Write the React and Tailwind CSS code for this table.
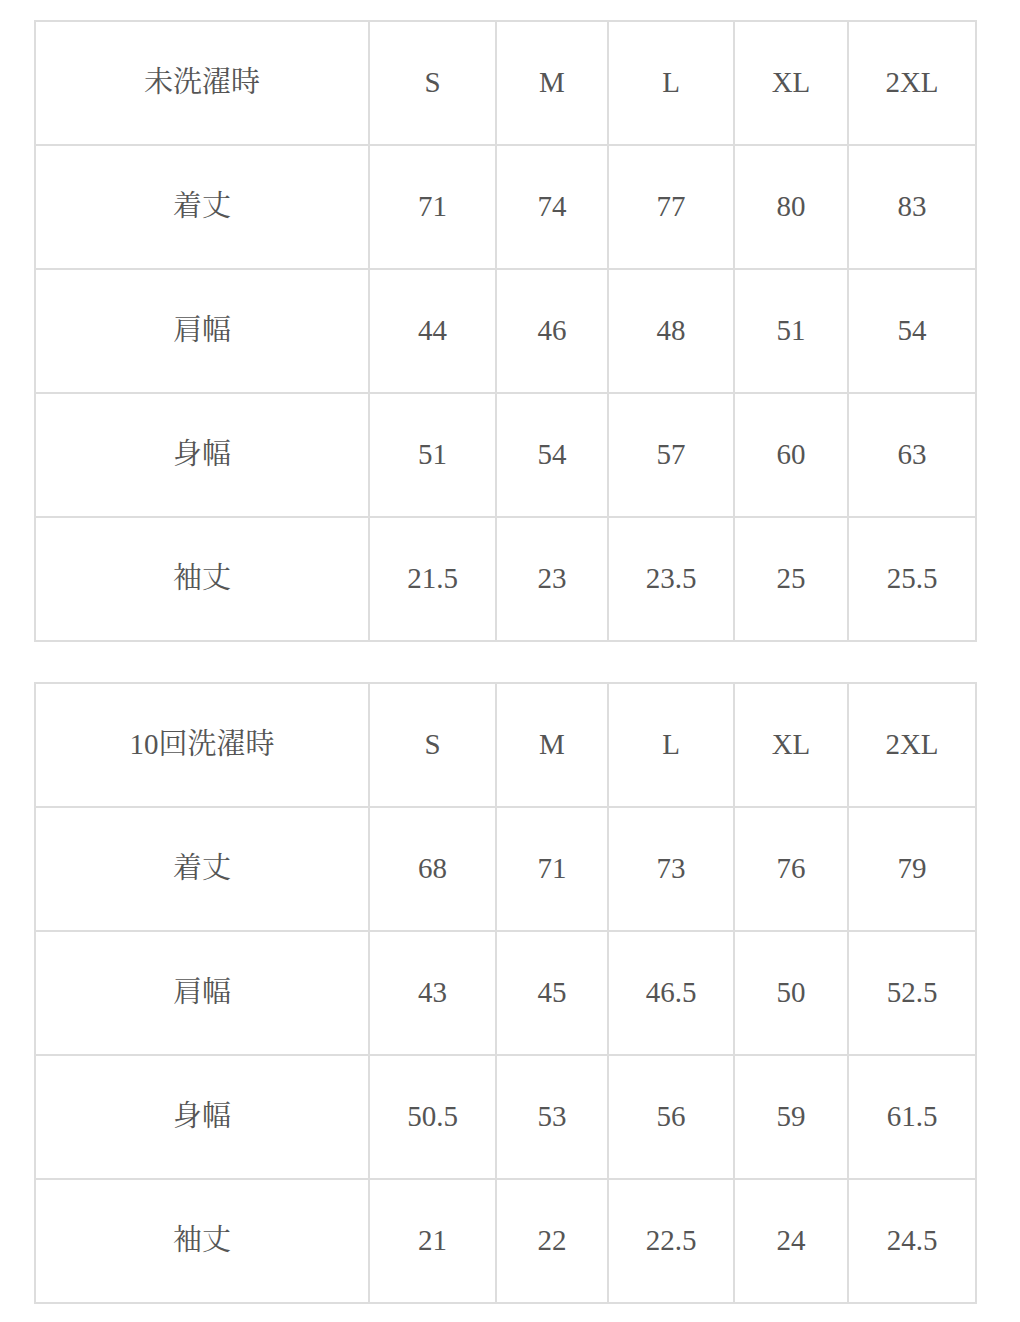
const sizes = ['S', 'M', 'L', 'XL', '2XL'];

const tables = [
  {
    title: '未洗濯時',
    rows: [
      ['着丈', '71', '74', '77', '80', '83'],
      ['肩幅', '44', '46', '48', '51', '54'],
      ['身幅', '51', '54', '57', '60', '63'],
      ['袖丈', '21.5', '23', '23.5', '25', '25.5'],
    ],
  },
  {
    title: '10回洗濯時',
    rows: [
      ['着丈', '68', '71', '73', '76', '79'],
      ['肩幅', '43', '45', '46.5', '50', '52.5'],
      ['身幅', '50.5', '53', '56', '59', '61.5'],
      ['袖丈', '21', '22', '22.5', '24', '24.5'],
    ],
  },
];

const SizeTable = ({ title, rows }) => {
  const all = [[title, ...sizes], ...rows];
  return (
    <div className="grid grid-cols-[334px_127px_112px_126px_114px_128px] border-t-2 border-l-2 border-[#dddddd] w-fit">
      {all.map((row, ri) =>
        row.map((cell, ci) => (
          <div
            key={`${ri}-${ci}`}
            className="h-[124px] flex items-center justify-center border-r-2 border-b-2 border-[#dddddd]"
          >
            {cell}
          </div>
        ))
      )}
    </div>
  );
};

export default function App() {
  return (
    <div
      className="min-h-[1322px] bg-white pt-5 pl-[34px] text-[29px] text-[#555555] flex flex-col gap-10"
      style={{ fontFamily: '"Liberation Serif", "Noto Serif CJK JP", "Noto Sans CJK JP", serif' }}
    >
      {tables.map((t) => (
        <SizeTable key={t.title} title={t.title} rows={t.rows} />
      ))}
    </div>
  );
}
